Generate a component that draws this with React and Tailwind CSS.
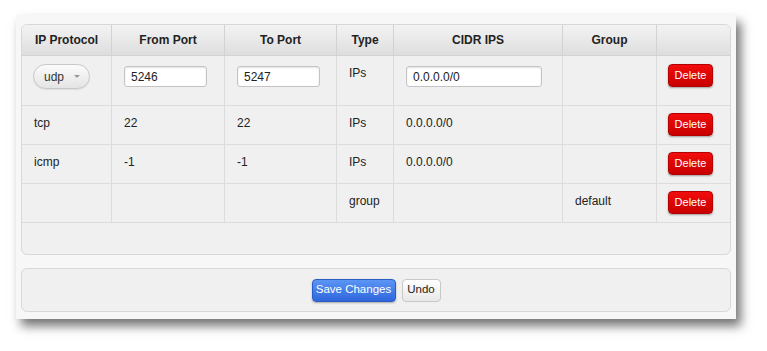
import React from 'react';

const cols = 'grid grid-cols-[90px_113px_112px_57px_169px_94px_75px]';

const rows = [
  { proto: 'tcp', from: '22', to: '22', type: 'IPs', cidr: '0.0.0.0/0', group: '' },
  { proto: 'icmp', from: '-1', to: '-1', type: 'IPs', cidr: '0.0.0.0/0', group: '' },
  { proto: '', from: '', to: '', type: 'group', cidr: '', group: 'default' },
];

const DeleteButton = () => (
  <button className="w-[45px] h-[23px] rounded-[4px] border border-[#b30000] bg-gradient-to-b from-[#f20d0d] to-[#c80000] text-white text-[11px] leading-none shadow-[0_1px_2px_rgba(0,0,0,0.35)]">
    Delete
  </button>
);

const Cell = ({ children, last, className = '' }) => (
  <div className={`${last ? '' : 'border-r border-[#dcdcdc]'} px-3 pt-2 leading-[18px] ${className}`}>
    {children}
  </div>
);

const TextInput = ({ value, width }) => (
  <input
    readOnly
    value={value}
    className={`${width} h-[21px] mt-[2px] px-[6px] bg-white border border-[#c4c4c4] rounded-[3px] shadow-[inset_0_1px_2px_rgba(0,0,0,0.12)] text-[12px] text-[#222] outline-none`}
  />
);

const App = () => {
  const headers = ['IP Protocol', 'From Port', 'To Port', 'Type', 'CIDR IPS', 'Group', ''];

  return (
    <div className="w-[767px] h-[351px] bg-white pt-[15px] pl-[16px] font-['Liberation_Sans',Arial,sans-serif] text-[12px] text-[#222]">
      <div className="w-[720px] h-[304px] bg-[#f7f7f7] shadow-[5px_7px_10px_rgba(0,0,0,0.55)] pt-[9px] px-[5px]">
        {/* Rules table */}
        <div className="h-[231px] rounded-[6px] border border-[#d8d8d8] bg-[#f0f0f0] overflow-hidden">
          <div className={`${cols} h-[31px] bg-gradient-to-b from-[#f3f3f3] to-[#dedede] border-b border-[#d2d2d2]`}>
            {headers.map((h, i) => (
              <div
                key={i}
                className={`${i < 6 ? 'border-r border-[#d2d2d2]' : ''} flex items-center justify-center font-bold text-[12px] text-[#222]`}
              >
                {h}
              </div>
            ))}
          </div>

          {/* Editable row */}
          <div className={`${cols} h-[50px] border-b border-[#dcdcdc]`}>
            <div className="border-r border-[#dcdcdc] pl-[11px] pt-[8px]">
              <div className="w-[57px] h-[25px] rounded-full border border-[#c8c8c8] bg-gradient-to-b from-[#fbfbfb] to-[#e4e4e4] shadow-[0_1px_1px_rgba(0,0,0,0.08)] flex items-center pl-[10px] text-[12px] text-[#333]">
                <span>udp</span>
                <span className="ml-[10px] w-0 h-0 border-l-[3px] border-r-[3px] border-t-[3px] border-l-transparent border-r-transparent border-t-[#999]" />
              </div>
            </div>
            <Cell><TextInput value="5246" width="w-[83px]" /></Cell>
            <Cell><TextInput value="5247" width="w-[83px]" /></Cell>
            <Cell>IPs</Cell>
            <Cell><TextInput value="0.0.0.0/0" width="w-[136px]" /></Cell>
            <Cell />
            <div className="pt-[8px] pl-[11px]"><DeleteButton /></div>
          </div>

          {rows.map((r, i) => (
            <div key={i} className={`${cols} h-[39px] border-b border-[#dcdcdc]`}>
              <Cell>{r.proto}</Cell>
              <Cell>{r.from}</Cell>
              <Cell>{r.to}</Cell>
              <Cell>{r.type}</Cell>
              <Cell>{r.cidr}</Cell>
              <Cell>{r.group}</Cell>
              <div className="pt-[7px] pl-[11px]"><DeleteButton /></div>
            </div>
          ))}
        </div>

        {/* Actions */}
        <div className="mt-[13px] h-[44px] rounded-[6px] border border-[#d8d8d8] bg-[#f0f0f0] flex items-center justify-center gap-[6px]">
          <button className="w-[84px] h-[23px] rounded-[4px] border border-[#2a5cc4] bg-gradient-to-b from-[#5b95f5] to-[#2f66dc] text-white text-[11.5px] shadow-[0_1px_2px_rgba(0,0,0,0.3)]">
            Save Changes
          </button>
          <button className="w-[39px] h-[23px] rounded-[4px] border border-[#c8c8c8] bg-gradient-to-b from-[#ffffff] to-[#e8e8e8] text-[#222] text-[11.5px]">
            Undo
          </button>
        </div>
      </div>
    </div>
  );
};

export default App;
